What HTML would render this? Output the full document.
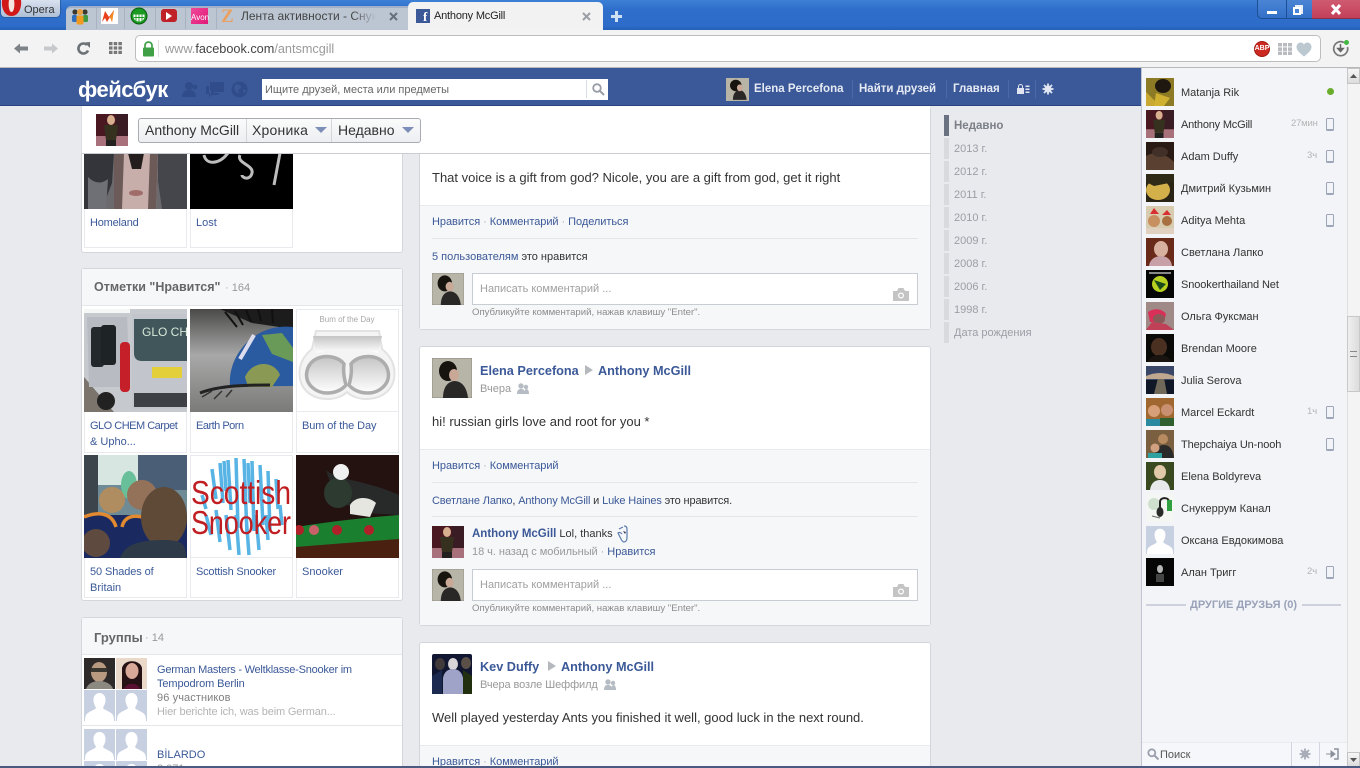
<!DOCTYPE html>
<html><head><meta charset="utf-8"><style>
*{box-sizing:border-box}
html,body{margin:0;padding:0;width:1360px;height:768px;overflow:hidden;background:#e9eaed}
body{position:relative;font-family:"Liberation Sans","Noto Sans CJK SC",sans-serif;font-size:11px;color:#333}
.a,.t{position:absolute}
.t{white-space:nowrap;line-height:14px;margin-top:1px}
.l{color:#3b5998}.g{color:#999}.d{color:#333}
.b{font-weight:bold}
.sep{color:#aaa}
.card{position:absolute;background:#fff;border:1px solid #d3d6db;border-radius:3px}
.cell{position:absolute;border:1px solid #e9eaed;background:#fff}
.hd{position:absolute;background:#f6f7f9;border-bottom:1px solid #e5e6e9}
.lk{position:absolute;height:1px;background:#e5e6e9}
.row{position:absolute;left:1181px;font-size:11px;color:#333;white-space:nowrap;line-height:14px;margin-top:1px}
.av{position:absolute;left:1146px;width:28px;height:28px}
.ph{position:absolute;left:1326px;width:8px;height:13px;border:1px solid #9da6b8;border-bottom-width:2px;border-radius:1.5px}
.yr{position:absolute;left:954px;font-size:11px;color:#9a9ea6;white-space:nowrap;line-height:14px;margin-top:1px}
.yb{position:absolute;left:944px;width:5px;height:21px;background:#d8dade}
.in{position:absolute;left:472px;width:446px;height:32px;background:#fff;border:1px solid #c8ccd3}
.hint{color:#8c8c8c;font-size:9.6px}
svg{position:absolute;display:block}
</style></head><body>

<!-- window chrome -->
<div class="a" style="left:0;top:0;width:1360px;height:30px;background:linear-gradient(#3d80d6,#2f6fcb 30%,#2d6cc8 85%,#2560b8)"></div>
<div class="a" style="left:0;top:0;width:61px;height:18px;background:linear-gradient(#d8e1ee,#aebfd6);border:1px solid #295ea8;border-top:0;border-radius:0 0 5px 5px"></div>
<svg style="left:1px;top:0" width="21" height="17" viewBox="0 0 21 17"><path d="M1 0h19c1 7-2 16-9.500 16S0 7 1 0z" fill="#d01818"/><path d="M8 0h5c1 5 0 12-2.500 12S7 5 8 0z" fill="#f4e4e0"/></svg>
<div class="t" style="left:24px;top:2px;color:#333;font-size:11px">Opera</div>

<div class="a" style="left:66px;top:6px;width:342px;height:24px;background:#bcc6d3;border-top:2px solid #9fb0c8;border-radius:5px 0 0 0"></div>
<div class="a" style="left:96px;top:8px;width:1px;height:21px;background:#a8b2c0"></div>
<div class="a" style="left:124px;top:8px;width:1px;height:21px;background:#a8b2c0"></div>
<div class="a" style="left:155px;top:8px;width:1px;height:21px;background:#a8b2c0"></div>
<div class="a" style="left:185px;top:8px;width:1px;height:21px;background:#a8b2c0"></div>
<div class="a" style="left:216px;top:8px;width:1px;height:21px;background:#a8b2c0"></div>
<svg style="left:71px;top:7px" width="18" height="18" viewBox="0 0 18 18"><circle cx="4" cy="5" r="2.600" fill="#3a3a30"/><circle cx="14" cy="5" r="2.600" fill="#3a3a30"/><circle cx="9" cy="5" r="3" fill="#e5a040"/><rect x="1" y="8" width="5" height="7" rx="1.500" fill="#2f6fc0"/><rect x="12" y="8" width="5" height="7" rx="1.500" fill="#3d9a40"/><rect x="5.500" y="8.500" width="7" height="9" rx="1.500" fill="#f09a20"/></svg>
<div class="a" style="left:101px;top:8px;width:17px;height:16px;background:#fff"></div>
<svg style="left:101px;top:8px" width="17" height="16" viewBox="0 0 17 16"><path d="M1 14 4 3l4 6 5-7-2 12-2-5-3 5-2-4z" fill="#e8401a"/><path d="M9 9l4-7-2 12z" fill="#f09020"/></svg>
<svg style="left:130px;top:7px" width="18" height="18" viewBox="0 0 18 18"><circle cx="9" cy="9" r="8" fill="#1a9a20" stroke="#0c5c10"/><path d="M3.500 7.500h11c.5 5-2 7-5.500 7s-6-2-5.500-7z" fill="#fff"/><path d="M6 7.500v6.500M9 7.500v7M12 7.500v6.500M4 10.500h10" stroke="#1a9a20" stroke-width=".9"/></svg>
<div class="a" style="left:161px;top:9px;width:16px;height:13px;background:#c02028;border-radius:3px"></div>
<svg style="left:166px;top:12px" width="7" height="8"><path d="M0 0l6 4-6 4z" fill="#fff"/></svg>
<div class="a" style="left:191px;top:8px;width:17px;height:16px;background:linear-gradient(135deg,#f04a9a,#e01878)"></div>
<div class="t" style="left:191px;top:11px;color:#fff;font-size:8px;width:17px;text-align:center;line-height:12px">Avon</div>
<div class="t b" style="left:221px;top:6px;color:#eaa060;font-size:19px;line-height:19px;font-family:'Liberation Serif',serif">Z</div>
<div class="t" style="left:241px;top:8px;color:#444;font-size:12px;width:135px;overflow:hidden">Лента активности - Снукеррум</div>
<div class="a" style="left:352px;top:9px;width:24px;height:15px;background:linear-gradient(90deg,rgba(188,198,211,0),#bcc6d3)"></div>
<svg style="left:389px;top:12px" width="9" height="9"><path d="M1 1l7 7M8 1 1 8" stroke="#66707c" stroke-width="2"/></svg>
<div class="a" style="left:408px;top:2px;width:195px;height:28px;background:#f2f2f2;border-radius:5px 5px 0 0"></div>
<div class="a" style="left:416px;top:9px;width:14px;height:14px;background:#3b5998"></div>
<div class="t b" style="left:423px;top:9px;color:#fff;font-size:13px;line-height:14px;font-family:'Liberation Serif',serif">f</div>
<div class="t" style="left:434px;top:8px;color:#222;font-size:11px;letter-spacing:-.2px">Anthony McGill</div>
<svg style="left:582px;top:12px" width="9" height="9"><path d="M1 1l7 7M8 1 1 8" stroke="#9a9fa6" stroke-width="2"/></svg>
<svg style="left:610px;top:10px" width="13" height="13"><path d="M6.500 1v11M1 6.500h11" stroke="#cfe0f5" stroke-width="3"/></svg>

<div class="a" style="left:1257px;top:-1px;width:30px;height:20px;background:linear-gradient(#4a84d4,#3270c8);border:1px solid #1e4e94;border-radius:0 0 0 5px"></div>
<div class="a" style="left:1286px;top:-1px;width:27px;height:20px;background:linear-gradient(#4a84d4,#3270c8);border:1px solid #1e4e94"></div>
<div class="a" style="left:1312px;top:-1px;width:48px;height:20px;background:linear-gradient(#cf5c72,#c4405a);border-bottom:1px solid #8c3048"></div>
<div class="a" style="left:1267px;top:11px;width:10px;height:3px;background:#fff"></div>
<div class="a" style="left:1295px;top:5px;width:8px;height:9px;border:2px solid #e8eef8;background:#4a84d4"></div>
<div class="a" style="left:1293px;top:7px;width:8px;height:8px;border:2px solid #fff;background:#4a84d4"></div>
<svg style="left:1330px;top:4px" width="12" height="11"><path d="M2 1l8 9M10 1 2 10" stroke="#fff" stroke-width="3"/></svg>

<!-- toolbar -->
<div class="a" style="left:0;top:30px;width:1360px;height:38px;background:#f3f3f3;border-bottom:1px solid #b8b8b8"></div>
<svg style="left:13px;top:41px" width="16" height="15"><path d="M1 7.500 7 2.500v3h8v4H7v3z" fill="#7d8287"/></svg>
<svg style="left:43px;top:41px" width="16" height="15"><path d="M15 7.500 9 2.500v3H1v4h8v3z" fill="#c6c9cc"/></svg>
<svg style="left:76px;top:41px" width="15" height="15" viewBox="0 0 15 15"><path d="M12 9.500A5 5 0 1 1 11 4" fill="none" stroke="#6d7277" stroke-width="2.600"/><path d="M8.500 1.500 14 1v6z" fill="#6d7277"/></svg>
<svg style="left:109px;top:42px" width="13" height="12" fill="#777"><rect width="3.500" height="3.200"/><rect x="4.700" width="3.500" height="3.200"/><rect x="9.400" width="3.500" height="3.200"/><rect y="4.400" width="3.500" height="3.200"/><rect x="4.700" y="4.400" width="3.500" height="3.200"/><rect x="9.400" y="4.400" width="3.500" height="3.200"/><rect y="8.800" width="3.500" height="3.200"/><rect x="4.700" y="8.800" width="3.500" height="3.200"/><rect x="9.400" y="8.800" width="3.500" height="3.200"/></svg>
<div class="a" style="left:135px;top:35px;width:1186px;height:27px;background:#fff;border:1px solid #bdbdbd;border-radius:5px"></div>
<svg style="left:142px;top:41px" width="13" height="16"><path d="M3 7V4.500a3.500 3.500 0 0 1 7 0V7" fill="none" stroke="#3fa046" stroke-width="1.700"/><rect x="1" y="6.500" width="11" height="9" rx="1" fill="#3fa046"/></svg>
<div class="a" style="left:158px;top:40px;width:1px;height:17px;background:#ddd"></div>
<div class="t" style="left:165px;top:40px;font-size:12.700px;line-height:16px;color:#9a9a9a">www.<span style="color:#444">facebook.com</span>/antsmcgill</div>
<div class="a" style="left:1254px;top:41px;width:16px;height:16px;background:#cc2a20;border-radius:50%;border:1px solid #a01a14"></div>
<div class="t b" style="left:1254px;top:42px;color:#fff;font-size:7px;width:16px;text-align:center;line-height:12px">ABP</div>
<svg style="left:1278px;top:43px" width="14" height="12" fill="#b8bcc0"><rect width="4" height="3.500"/><rect x="5" width="4" height="3.500"/><rect x="10" width="4" height="3.500"/><rect y="4.400" width="4" height="3.500"/><rect x="5" y="4.400" width="4" height="3.500"/><rect x="10" y="4.400" width="4" height="3.500"/><rect y="8.500" width="4" height="3.500"/><rect x="5" y="8.500" width="4" height="3.500"/><rect x="10" y="8.500" width="4" height="3.500"/></svg>
<svg style="left:1296px;top:42px" width="16" height="15"><path d="M8 14.500C3 10.500.5 8 .5 5 .5 2.500 2.500.5 4.500.5 6 .5 7.300 1.300 8 2.500 8.700 1.300 10 .5 11.500.5c2 0 4 2 4 4.500 0 3-2.500 5.500-7.500 9.500z" fill="#bcc8d0"/></svg>
<svg style="left:1332px;top:39px" width="18" height="19" viewBox="0 0 18 19"><path d="M12 3.500A7 7 0 1 0 15.500 8" fill="none" stroke="#777" stroke-width="1.700"/><path d="M8.500 5v6M5.800 9.500l2.700 3 2.700-3z" stroke="#666" stroke-width="1.500" fill="#666"/><circle cx="14.500" cy="3.500" r="2.500" fill="#42b840"/></svg>

<!-- fb header -->
<div class="a" style="left:0;top:68px;width:1141px;height:38px;background:#3b5998;border-bottom:1px solid #29447e"></div>
<div class="t b" style="left:78px;top:75px;color:#fff;font-size:22px;line-height:28px;letter-spacing:-.5px">фейсбук</div>
<svg style="left:181px;top:81px" width="18" height="17" fill="#304c8a"><circle cx="8" cy="5" r="4"/><path d="M1 16c0-5 3-7 7-7s7 2 7 7z"/><circle cx="14" cy="6" r="2.500"/></svg>
<svg style="left:206px;top:81px" width="18" height="16" fill="#304c8a"><path d="M4 1h14v10H8l-3 3V9H4z"/><path d="M0 5h3v7h1v3l3-3h6v2H7l-4 2v-3H0z"/></svg>
<svg style="left:231px;top:81px" width="17" height="17"><circle cx="8.500" cy="8.500" r="8" fill="#304c8a"/><path d="M5 3l4 1 1 3-3 2 1 4-3-2-2-4zM12 9l3 0-2 4z" fill="#3b5998"/></svg>
<div class="a" style="left:261px;top:78px;width:348px;height:23px;background:#fff;border:1px solid #3b5998"></div>
<div class="a" style="left:586px;top:80px;width:1px;height:18px;background:#d8dce4"></div>
<div class="t" style="left:265px;top:82px;color:#666;font-size:11px">Ищите друзей, места или предметы</div>
<svg style="left:592px;top:83px" width="13" height="13"><circle cx="5" cy="5" r="3.800" fill="none" stroke="#9a9ea8" stroke-width="1.800"/><path d="M8 8l4 4" stroke="#9a9ea8" stroke-width="2"/></svg>
<svg style="left:726px;top:78px" width="23" height="23" viewBox="0 0 40 40"><rect width="40" height="40" fill="#b8b4a6"/><ellipse cx="17" cy="13" rx="10" ry="10" fill="#17140f"/><path d="M12 38c0-10 4-16 11-17 8 0 12 8 13 17z" fill="#2a2826"/><ellipse cx="24" cy="17" rx="5" ry="6" fill="#c9a898"/></svg>
<div class="t b" style="left:754px;top:81px;color:#e6eaf4;font-size:11.500px">Elena Percefona</div>
<div class="a" style="left:852px;top:80px;width:1px;height:18px;background:#4c6aa8"></div>
<div class="t b" style="left:859px;top:81px;color:#e6eaf4;font-size:11.500px">Найти друзей</div>
<div class="a" style="left:946px;top:80px;width:1px;height:18px;background:#4c6aa8"></div>
<div class="t b" style="left:953px;top:81px;color:#e6eaf4;font-size:11.500px">Главная</div>
<div class="a" style="left:1008px;top:80px;width:1px;height:18px;background:#4c6aa8"></div>
<svg style="left:1017px;top:84px" width="13" height="11" fill="#dfe4f0"><rect y="4" width="7" height="6"/><path d="M1.500 4V2.500a2 2 0 0 1 4 0V4" fill="none" stroke="#dfe4f0"/><rect x="8.500" y="1.500" width="4" height="1.500"/><rect x="8.500" y="4.500" width="4" height="1.500"/><rect x="8.500" y="7.500" width="4" height="1.500"/></svg>
<div class="a" style="left:1035px;top:80px;width:1px;height:18px;background:#4c6aa8"></div>
<svg style="left:1042px;top:83px" width="12" height="12" viewBox="0 0 12 12"><circle cx="6" cy="6" r="3.500" fill="#e3e7f1"/><path d="M6 .5v11M.5 6h11M2 2l8 8M10 2l-8 8" stroke="#e3e7f1" stroke-width="1.800"/></svg>

<!-- left column cards -->
<div class="card" style="left:81px;top:107px;width:322px;height:146px"></div>
<svg style="left:84px;top:153px" width="103" height="56" viewBox="0 0 103 56"><rect width="103" height="56" fill="#6c6a6d"/><path d="M0 0h30l-2 30-10 26H0z" fill="#33353a"/><path d="M4 24q10 10 20 2l-2 30H4z" fill="#6f7075"/><path d="M74 0h29v56H78l-4-28z" fill="#45464c"/><path d="M30 0h44l-2 56H30z" fill="#c7aeaa"/><path d="M44 0h16l-3 16h-9z" fill="#231d1d"/><path d="M30 0h10l-2 56h-8zM66 0h8l-2 56h-8z" fill="#6b5a58"/><ellipse cx="52" cy="40" rx="7" ry="3" fill="#a06c6a"/></svg>
<div class="a" style="left:190px;top:153px;width:103px;height:56px;background:#000"></div>
<svg style="left:190px;top:153px" width="103" height="56" viewBox="0 0 103 56"><path d="M14 2c2 10 15 10 24-2M50 2c-4 8 14 10 12 18s-10 5-10 2M90 0l-6 32" fill="none" stroke="#bdbdbd" stroke-width="3"/></svg>
<div class="cell" style="left:84px;top:209px;width:103px;height:39px;border-top:0"></div>
<div class="cell" style="left:190px;top:209px;width:103px;height:39px;border-top:0"></div>
<div class="t l" style="left:90px;top:215px;letter-spacing:-.2px">Homeland</div>
<div class="t l" style="left:196px;top:215px">Lost</div>

<div class="card" style="left:81px;top:268px;width:322px;height:333px"></div>
<div class="hd" style="left:82px;top:269px;width:320px;height:37px"></div>
<div class="t b" style="left:94px;top:279px;color:#666;font-size:12.500px;line-height:15px">Отметки "Нравится"</div>
<div class="t g" style="left:225px;top:280px"><span class="sep">·</span> 164</div>

<svg style="left:84px;top:309px" width="103" height="103" viewBox="0 0 103 103"><rect width="103" height="103" fill="#c6c9cd"/><path d="M0 0h46v4H0z" fill="#f5f6f6"/><path d="M0 68l30 35H0z" fill="#7b746c"/><path d="M3 8h40l3 70H5z" fill="#b8bbc2"/><path d="M48 5h55v95H48z" fill="#c2c5cb"/><path d="M50 10h53v42H58q-8 0-8-8z" fill="#40565a"/><rect x="7" y="18" width="13" height="40" rx="3" fill="#22282b"/><rect x="17" y="16" width="15" height="40" rx="3" fill="#1e2326"/><rect x="36" y="33" width="10" height="50" rx="4" fill="#c5202a"/><rect x="68" y="58" width="30" height="11" fill="#e3cf3a"/><rect x="50" y="84" width="53" height="14" fill="#3d4044"/><text x="58" y="27" font-size="12" fill="#d6e8d8" font-family="Liberation Sans">GLO CHEM</text><circle cx="22" cy="92" r="9" fill="#222"/></svg>
<svg style="left:190px;top:309px" width="103" height="103" viewBox="0 0 103 103"><defs><linearGradient id="eg" x1="0" y1="0" x2="0" y2="1"><stop offset="0" stop-color="#4a4a49"/><stop offset=".45" stop-color="#a8a8a8"/><stop offset="1" stop-color="#7a7a79"/></linearGradient></defs><rect width="103" height="103" fill="url(#eg)"/><path d="M30 0h73v20L62 14z" fill="#1c1c1c"/><path d="M45 2l8 14M56 1l5 12M68 0l3 12M35 3l12 15M82 0l1 14" stroke="#111" stroke-width="2"/><path d="M40 76c-2-28 22-62 63-58v59q-30 0-46 1z" fill="#2a5aa0"/><path d="M55 68c8-18 30-16 35-2l-8 12H58z" fill="#8a9a55"/><path d="M72 26l20-2 11 15v14L82 45z" fill="#6a9a58"/><path d="M50 50 64 26" stroke="#dde" stroke-width="4"/><path d="M10 84c20-8 50-8 70-8" stroke="#222" stroke-width="3" fill="none"/><path d="M12 88l10-6M24 90l8-8M36 88l6-7" stroke="#333" stroke-width="1.500"/></svg>
<div class="a" style="left:296px;top:309px;width:103px;height:103px;background:#fff;border:1px solid #e9eaed"></div>
<svg style="left:296px;top:309px" width="103" height="103" viewBox="0 0 103 103"><text x="51" y="13" font-size="8" text-anchor="middle" fill="#a8a8a8" font-family="Liberation Sans">Bum of the Day</text><defs><linearGradient id="bg" x1="0" y1="0" x2="0" y2="1"><stop offset="0" stop-color="#c4c4c4"/><stop offset="1" stop-color="#fff"/></linearGradient></defs><path d="M20 22h63l3 18c10 8 14 18 12 30-3 14-15 20-28 20-8 0-15-3-19-7-4 4-11 7-19 7C19 90 7 84 4 70 2 58 6 48 16 40z" fill="#f4f4f4" stroke="#e2e2e2" stroke-width="2"/><path d="M17 27h69l-4 17-14-3H35l-15 3z" fill="url(#bg)"/><path d="M48 55C40 44 15 44 11 62c-3 14 10 22 20 22 8 0 15-3 19-8-2-7-3-14-2-21zM55 55c8-11 33-11 37 7 3 14-10 22-20 22-8 0-15-3-19-8 2-7 3-14 2-21z" fill="url(#bg)" stroke="#adadad" stroke-width="3.500"/></svg>
<div class="cell" style="left:84px;top:412px;width:103px;height:41px;border-top:0"></div>
<div class="cell" style="left:190px;top:412px;width:103px;height:41px;border-top:0"></div>
<div class="cell" style="left:296px;top:412px;width:103px;height:41px;border-top:0"></div>
<div class="t l" style="left:90px;top:418px;letter-spacing:-.5px">GLO CHEM Carpet</div>
<div class="t l" style="left:90px;top:434px">&amp; Upho...</div>
<div class="t l" style="left:196px;top:418px;letter-spacing:-.5px">Earth Porn</div>
<div class="t l" style="left:302px;top:418px;letter-spacing:-.1px">Bum of the Day</div>

<svg style="left:84px;top:455px" width="103" height="103" viewBox="0 0 103 103"><rect width="103" height="103" fill="#6f8b95"/><rect width="14" height="60" fill="#3c444c"/><rect x="14" y="0" width="40" height="30" fill="#d8e6e2"/><rect x="75" width="8" height="40" fill="#d98a30"/><rect x="54" width="50" height="35" fill="#4a5f75"/><ellipse cx="45" cy="30" rx="8" ry="14" fill="#68c09a"/><ellipse cx="28" cy="45" rx="13" ry="13" fill="#b08d60"/><ellipse cx="58" cy="40" rx="15" ry="15" fill="#94725a"/><rect y="60" width="103" height="43" fill="#1a2a60"/><path d="M0 62c15-6 28-4 32 10M38 72c2-10 10-12 20-10" fill="none" stroke="#e28a30" stroke-width="3.500"/><ellipse cx="12" cy="88" rx="14" ry="14" fill="#5f4a40"/><ellipse cx="80" cy="62" rx="23" ry="30" fill="#5f4a38"/><path d="M36 103c5-14 20-18 44-18s20 8 23 18z" fill="#2e3a48"/></svg>
<div class="a" style="left:190px;top:455px;width:103px;height:103px;background:#fff;border:1px solid #e9eaed"></div>
<svg style="left:190px;top:455px" width="103" height="103" viewBox="0 0 103 103"><g stroke="#58b4e4" stroke-width="3.500"><path d="M22 14l4 30M30 8l3 40M38 5l3 50M46 3l2 70M54 4l3 75M62 6l2 70M70 10l3 60M78 16l2 60M86 24l2 30M16 60l5 20M26 55l4 32M36 60l4 35M46 60l3 40M56 60l3 40M66 60l3 35M76 60l2 25M90 50l2 20M12 40l4 14M34 6l2 30M58 8l2 40"/></g><text x="51" y="49" font-size="33" text-anchor="middle" textLength="100" lengthAdjust="spacingAndGlyphs" fill="#c01e22" font-family="Liberation Sans">Scottish</text><text x="51" y="79" font-size="33" text-anchor="middle" textLength="100" lengthAdjust="spacingAndGlyphs" fill="#c01e22" font-family="Liberation Sans">Snooker</text></svg>
<svg style="left:296px;top:455px" width="103" height="103" viewBox="0 0 103 103"><rect width="103" height="103" fill="#241210"/><path d="M0 72q50-8 103-12v30q-40 0-60 3H0z" fill="#1a8030"/><path d="M0 92q50-4 103-8v19H0z" fill="#4a2010"/><path d="M30 15c10 10 40 10 73 25V60L70 58 40 45z" fill="#282a2a"/><ellipse cx="42" cy="38" rx="14" ry="15" fill="#2c3a30"/><circle cx="45" cy="17" r="8" fill="#f0f0f0"/><path d="M54 50c6-10 20-8 26-2l-6 14-20-3z" fill="#e6e6e0"/><g fill="#b02028"><circle cx="3" cy="75" r="5"/><circle cx="18" cy="75" r="5" fill="#c86068"/><circle cx="41" cy="75" r="5"/><circle cx="73" cy="75" r="5"/></g></svg>
<div class="cell" style="left:84px;top:558px;width:103px;height:40px;border-top:0"></div>
<div class="cell" style="left:190px;top:558px;width:103px;height:40px;border-top:0"></div>
<div class="cell" style="left:296px;top:558px;width:103px;height:40px;border-top:0"></div>
<div class="t l" style="left:90px;top:564px;letter-spacing:-.1px">50 Shades of</div>
<div class="t l" style="left:90px;top:580px">Britain</div>
<div class="t l" style="left:196px;top:564px;letter-spacing:-.2px">Scottish Snooker</div>
<div class="t l" style="left:302px;top:564px">Snooker</div>

<div class="card" style="left:81px;top:617px;width:322px;height:170px"></div>
<div class="hd" style="left:82px;top:618px;width:320px;height:37px"></div>
<div class="t b" style="left:94px;top:629px;color:#666;font-size:13px;line-height:15px">Группы</div>
<div class="t g" style="left:145px;top:630px"><span class="sep">·</span> 14</div>

<svg style="left:84px;top:658px" width="31" height="31" viewBox="0 0 31 31"><rect width="31" height="31" fill="#2f2a2a"/><ellipse cx="15" cy="14" rx="8" ry="10" fill="#b89a80"/><rect x="7" y="10" width="16" height="4" fill="#3a3630"/><path d="M2 31c2-6 8-8 13-8s12 2 14 8z" fill="#8c8a80"/></svg>
<svg style="left:116px;top:658px" width="31" height="31" viewBox="0 0 31 31"><rect width="31" height="31" fill="#ead8c8"/><path d="M6 31V10C8 1 24 1 26 10v21z" fill="#241214"/><ellipse cx="16" cy="13" rx="6.500" ry="8" fill="#d8a898"/><path d="M8 31c2-7 14-7 16 0z" fill="#5a1030"/></svg>
<svg width="0" height="0"><defs><symbol id="sil" viewBox="0 0 31 31"><rect width="31" height="31" fill="#c7d0e1"/><path d="M15.500 3c4 0 6.500 3.500 6 8-.4 3.500-2 5.500-2.500 7 1 2 8 3.500 10 7 .8 1.700 1 3.500 1 6H1c0-2.500.2-4.300 1-6 2-3.500 9-5 10-7-.5-1.500-2.100-3.500-2.500-7-.5-4.500 2-8 6-8z" fill="#fff"/></symbol></defs></svg>
<svg style="left:84px;top:690px" width="31" height="31"><use href="#sil"/></svg>
<svg style="left:116px;top:690px" width="31" height="31"><use href="#sil"/></svg>
<div class="t l" style="left:157px;top:662px;letter-spacing:-.24px">German Masters - Weltklasse-Snooker im</div>
<div class="t l" style="left:157px;top:676px;letter-spacing:-.1px">Tempodrom Berlin</div>
<div class="t" style="left:157px;top:690px;color:#808080;letter-spacing:.1px">96 участников</div>
<div class="t" style="left:157px;top:704px;color:#b4b4b4;letter-spacing:-.15px">Hier berichte ich, was beim German...</div>
<div class="lk" style="left:82px;top:725px;width:320px"></div>
<svg style="left:84px;top:729px" width="31" height="31"><use href="#sil"/></svg>
<svg style="left:116px;top:729px" width="31" height="31"><use href="#sil"/></svg>
<svg style="left:84px;top:761px" width="31" height="31"><use href="#sil"/></svg>
<svg style="left:116px;top:761px" width="31" height="31"><use href="#sil"/></svg>
<div class="t l" style="left:157px;top:747px">BİLARDO</div>
<div class="t g" style="left:157px;top:761px">2 071</div>

<!-- right column posts -->
<div class="card" style="left:419px;top:107px;width:512px;height:223px"></div>
<div class="t d" style="left:432px;top:170px;font-size:13px">That voice is a gift from god? Nicole, you are a gift from god, get it right</div>
<div class="a" style="left:420px;top:205px;width:510px;height:124px;background:#f6f7f8;border-top:1px solid #e9eaed"></div>
<div class="t l" style="left:432px;top:214px;letter-spacing:-.05px">Нравится <span class="sep">·</span> Комментарий <span class="sep">·</span> Поделиться</div>
<div class="lk" style="left:432px;top:238px;width:486px"></div>
<div class="t d" style="left:432px;top:249px"><span class="l">5 пользователям</span> это нравится</div>
<svg style="left:432px;top:273px" width="32" height="32" viewBox="0 0 40 40"><use href="#ep"/></svg>
<div class="in" style="top:273px"></div>
<div class="t" style="left:480px;top:281px;color:#a0a0a0">Написать комментарий ...</div>
<svg style="left:893px;top:288px" width="16" height="13"><use href="#cam"/></svg>
<div class="t hint" style="left:472px;top:305px">Опубликуйте комментарий, нажав клавишу "Enter".</div>

<svg width="0" height="0"><defs>
<symbol id="ep" viewBox="0 0 40 40"><rect width="40" height="40" fill="#b7b4a8"/><rect width="40" height="40" fill="none" stroke="#8e8c82"/><ellipse cx="16" cy="13" rx="9" ry="10" fill="#17140f"/><ellipse cx="22" cy="17" rx="5" ry="6" fill="#c9a898"/><path d="M11 40c0-10 4-16 11-17 9 0 13 8 14 17z" fill="#2a2826"/></symbol>
<symbol id="cam" viewBox="0 0 16 13"><path d="M0 3h4l1.500-3h5L12 3h4v10H0z" fill="#c4c4c4"/><circle cx="8" cy="7.500" r="3" fill="#fff"/><circle cx="8" cy="7.500" r="1.800" fill="#c4c4c4"/></symbol>
<symbol id="am" viewBox="0 0 32 32"><rect width="32" height="32" fill="#4a1820"/><rect x="20" width="12" height="32" fill="#3a1c24"/><rect x="0" y="22" width="32" height="10" fill="#a8707a"/><ellipse cx="15" cy="6" rx="4" ry="5" fill="#d8b090"/><path d="M8 11h14l-2 15H10z" fill="#36301f"/><rect x="10" y="26" width="10" height="6" fill="#232020"/></symbol>
</defs></svg>

<div class="card" style="left:419px;top:346px;width:512px;height:280px"></div>
<svg style="left:432px;top:358px" width="40" height="40" viewBox="0 0 40 40"><use href="#ep"/></svg>
<div class="t b l" style="left:480px;top:362px;font-size:12.700px;line-height:16px">Elena Percefona</div>
<svg style="left:585px;top:365px" width="8" height="10"><path d="M0 0l8 5-8 5z" fill="#b5b8bd"/></svg>
<div class="t b l" style="left:598px;top:362px;font-size:12.700px;line-height:16px">Anthony McGill</div>
<div class="t g" style="left:480px;top:381px">Вчера</div>
<svg style="left:517px;top:383px" width="12" height="11" fill="#b6bcc4"><circle cx="4" cy="3" r="2.700"/><path d="M0 11c0-4 1.500-5 4-5s4 1 4 5z"/><circle cx="9" cy="4" r="2.200"/><path d="M7 11c.5-3 1-5 2.500-5S12 8 12 11z"/></svg>
<div class="t d" style="left:432px;top:414px;font-size:13px">hi! russian girls love and root for you *</div>
<div class="a" style="left:420px;top:449px;width:510px;height:176px;background:#f6f7f8;border-top:1px solid #e9eaed"></div>
<div class="t l" style="left:432px;top:458px;letter-spacing:-.05px">Нравится <span class="sep">·</span> Комментарий</div>
<div class="lk" style="left:432px;top:482px;width:486px"></div>
<div class="t d" style="left:432px;top:493px;letter-spacing:-.14px"><span class="l">Светлане Лапко</span>, <span class="l">Anthony McGill</span> и <span class="l">Luke Haines</span> это нравится.</div>
<div class="lk" style="left:432px;top:516px;width:486px"></div>
<svg style="left:432px;top:526px" width="32" height="32"><use href="#am"/></svg>
<div class="t" style="left:472px;top:526px"><span class="b l" style="font-size:11.500px">Anthony McGill</span> <span class="d">Lol, thanks</span></div>
<svg style="left:616px;top:525px" width="14" height="18" viewBox="0 0 14 18"><path d="M8 1c2 0 3 1 3 3l0 8c0 3-1 5-3 5-1 0-2-1-3-3L2 8c1-1 3-.5 4 1 M3 4l4-2" fill="none" stroke="#5b7bb0" stroke-width="1.200"/><path d="M7 6l3 1-1 2z" fill="#335"/></svg>
<div class="t g" style="left:472px;top:544px;letter-spacing:-.05px">18 ч. назад с мобильный <span class="sep">·</span> <span class="l">Нравится</span></div>
<svg style="left:432px;top:569px" width="32" height="32" viewBox="0 0 40 40"><use href="#ep"/></svg>
<div class="in" style="top:569px"></div>
<div class="t" style="left:480px;top:577px;color:#a0a0a0">Написать комментарий ...</div>
<svg style="left:893px;top:584px" width="16" height="13"><use href="#cam"/></svg>
<div class="t hint" style="left:472px;top:601px">Опубликуйте комментарий, нажав клавишу "Enter".</div>

<div class="card" style="left:419px;top:642px;width:512px;height:160px"></div>
<svg style="left:432px;top:654px" width="40" height="40" viewBox="0 0 40 40"><rect width="40" height="40" rx="2" fill="#111730"/><ellipse cx="21" cy="10" rx="5" ry="6" fill="#d8d4d8"/><path d="M11 40V24c1-6 5-9 10-9s9 3 10 9v16z" fill="#9fa3c8"/><ellipse cx="8" cy="10" rx="5" ry="6" fill="#403a3a"/><ellipse cx="34" cy="9" rx="5" ry="6" fill="#5a5048"/><path d="M0 22l10-6v24H0z" fill="#1c2a50"/><path d="M31 16l9 6v18H31z" fill="#223010"/></svg>
<div class="t b l" style="left:480px;top:658px;font-size:12.700px;line-height:16px">Kev Duffy</div>
<svg style="left:548px;top:661px" width="8" height="10"><path d="M0 0l8 5-8 5z" fill="#b5b8bd"/></svg>
<div class="t b l" style="left:561px;top:658px;font-size:12.700px;line-height:16px">Anthony McGill</div>
<div class="t g" style="left:480px;top:677px;letter-spacing:-.1px">Вчера возле Шеффилд</div>
<svg style="left:604px;top:679px" width="12" height="11" fill="#b6bcc4"><circle cx="4" cy="3" r="2.700"/><path d="M0 11c0-4 1.500-5 4-5s4 1 4 5z"/><circle cx="9" cy="4" r="2.200"/><path d="M7 11c.5-3 1-5 2.500-5S12 8 12 11z"/></svg>
<div class="t d" style="left:432px;top:710px;font-size:13px">Well played yesterday Ants you finished it well, good luck in the next round.</div>
<div class="a" style="left:420px;top:745px;width:510px;height:30px;background:#f6f7f8;border-top:1px solid #e9eaed"></div>
<div class="t l" style="left:432px;top:754px;letter-spacing:-.05px">Нравится <span class="sep">·</span> Комментарий</div>

<!-- sticky header -->
<div class="a" style="left:81px;top:106px;width:849px;height:48px;background:#fff;border-bottom:1px solid #c9ccd2;border-left:1px solid #dcdee2"></div>
<svg style="left:96px;top:114px" width="32" height="32"><use href="#am"/></svg>
<div class="a" style="left:138px;top:118px;width:283px;height:25px;background:linear-gradient(#fbfbfb,#eceef1);border:1px solid #a8abb2;border-radius:3px"></div>
<div class="a" style="left:246px;top:119px;width:1px;height:23px;background:#d4d6da"></div>
<div class="a" style="left:331px;top:119px;width:1px;height:23px;background:#d4d6da"></div>
<div class="t" style="left:145px;top:122px;color:#333;font-size:14px;line-height:15px">Anthony McGill</div>
<div class="t" style="left:252px;top:122px;color:#333;font-size:14px;line-height:15px;letter-spacing:.2px">Хроника</div>
<div class="t" style="left:338px;top:122px;color:#333;font-size:14px;line-height:15px">Недавно</div>
<svg style="left:315px;top:127px" width="12" height="6"><path d="M0 0h12L6 6z" fill="#7d8fb8"/></svg>
<svg style="left:402px;top:127px" width="12" height="6"><path d="M0 0h12L6 6z" fill="#7d8fb8"/></svg>

<!-- timeline nav -->
<div class="a" style="left:944px;top:115px;width:5px;height:21px;background:#6a7180"></div>
<div class="t b" style="left:954px;top:118px;color:#7b7f87;font-size:11.500px">Недавно</div>
<div class="yb" style="top:138px"></div><div class="yr" style="top:141px">2013 г.</div>
<div class="yb" style="top:161px"></div><div class="yr" style="top:164px">2012 г.</div>
<div class="yb" style="top:184px"></div><div class="yr" style="top:187px">2011 г.</div>
<div class="yb" style="top:207px"></div><div class="yr" style="top:210px">2010 г.</div>
<div class="yb" style="top:230px"></div><div class="yr" style="top:233px">2009 г.</div>
<div class="yb" style="top:253px"></div><div class="yr" style="top:256px">2008 г.</div>
<div class="yb" style="top:276px"></div><div class="yr" style="top:279px">2006 г.</div>
<div class="yb" style="top:299px"></div><div class="yr" style="top:302px">1998 г.</div>
<div class="yb" style="top:322px"></div><div class="yr" style="top:325px">Дата рождения</div>

<!-- chat sidebar -->
<div class="a" style="left:1141px;top:68px;width:206px;height:700px;background:#f2f4f8;border-left:1px solid #bfc4d0"></div>
<svg class="av" style="top:78px" viewBox="0 0 28 28"><rect width="28" height="28" fill="#8c7a25"/><path d="M0 14l14 14H0z" fill="#c8a830"/><ellipse cx="17" cy="8" rx="8" ry="7" fill="#1f1810"/><path d="M10 15l14 5-6 8H8z" fill="#d0b030"/></svg>
<svg class="av" style="top:110px"><use href="#am"/></svg>
<svg class="av" style="top:142px" viewBox="0 0 28 28"><rect width="28" height="28" fill="#2a1a14"/><path d="M0 14c10-6 20-2 28 6v8H0z" fill="#5a4030"/><ellipse cx="14" cy="10" rx="8" ry="5" fill="#403028"/></svg>
<svg class="av" style="top:174px" viewBox="0 0 28 28"><rect width="28" height="28" fill="#2a2416"/><ellipse cx="12" cy="16" rx="12" ry="10" fill="#d4b04a"/><path d="M0 0h28v8L8 12 0 8z" fill="#2f2a18"/></svg>
<svg class="av" style="top:206px" viewBox="0 0 28 28"><rect width="28" height="28" fill="#d8ccb0"/><circle cx="8" cy="15" r="6" fill="#c89060"/><circle cx="21" cy="15" r="5" fill="#a87040"/><path d="M4 8l4-6 5 6zM16 9l5-5 4 5z" fill="#d83030"/><rect y="22" width="28" height="6" fill="#e0d0c0"/></svg>
<svg class="av" style="top:238px" viewBox="0 0 28 28"><rect width="28" height="28" fill="#6a2a1a"/><ellipse cx="15" cy="11" rx="7" ry="8" fill="#d8b0a0"/><path d="M3 28c1-8 8-10 12-10s10 2 11 10z" fill="#c8a0a8"/></svg>
<svg class="av" style="top:270px" viewBox="0 0 28 28"><rect width="28" height="28" fill="#060606"/><ellipse cx="14" cy="14" rx="8" ry="8" fill="#b8d020"/><path d="M8 10l12 4-6 6z" fill="#1a4a1a"/><rect x="3" y="2" width="22" height="2" fill="#888"/></svg>
<svg class="av" style="top:302px" viewBox="0 0 28 28"><rect width="28" height="28" fill="#a08a88"/><path d="M2 10c5-4 14-4 18 2l-2 8H4z" fill="#d83058"/><ellipse cx="13" cy="17" rx="6" ry="5" fill="#8a5a58"/><path d="M0 28l6-8 14 2 8 6z" fill="#c04058"/></svg>
<svg class="av" style="top:334px" viewBox="0 0 28 28"><rect width="28" height="28" fill="#0a0a08"/><ellipse cx="13" cy="13" rx="8" ry="9" fill="#4a3020"/><path d="M2 28c2-6 8-7 12-7s9 1 11 7z" fill="#1a1410"/></svg>
<svg class="av" style="top:366px" viewBox="0 0 28 28"><rect width="28" height="18" fill="#3a4668"/><rect y="14" width="28" height="14" fill="#101828"/><path d="M8 28l4-16c2-2 5-2 6 0l3 16z" fill="#706858"/><path d="M0 10q14-6 28 0v3H0z" fill="#c0a890"/></svg>
<svg class="av" style="top:398px" viewBox="0 0 28 28"><rect width="28" height="28" fill="#a06830"/><circle cx="8" cy="13" r="6" fill="#d8a078"/><circle cx="21" cy="12" r="6" fill="#c89070"/><rect y="21" width="14" height="7" fill="#2a8aa0"/><rect x="14" y="20" width="14" height="8" fill="#306030"/></svg>
<svg class="av" style="top:430px" viewBox="0 0 28 28"><rect width="28" height="28" fill="#7a6040"/><circle cx="17" cy="9" r="5" fill="#b88a60"/><path d="M8 28c0-8 4-13 10-13s9 5 10 13z" fill="#2a2a2a"/><circle cx="9" cy="18" r="4.500" fill="#d0a080"/><rect x="2" y="23" width="14" height="5" fill="#30a0a0"/></svg>
<svg class="av" style="top:462px" viewBox="0 0 28 28"><rect width="28" height="28" fill="#3a4a20"/><ellipse cx="14" cy="10" rx="6" ry="7" fill="#e0c8a8"/><path d="M4 28c1-8 6-10 10-10s9 2 10 10z" fill="#e6e8ea"/></svg>
<svg class="av" style="top:494px" viewBox="0 0 28 28"><rect width="28" height="28" fill="#f4f6f4"/><circle cx="8" cy="10" r="6" fill="#cfe0cf"/><path d="M14 16V8c0-5 8-5 9-1v9" fill="none" stroke="#222" stroke-width="2"/><rect x="21" y="6" width="5" height="11" fill="#30a040"/><ellipse cx="14" cy="18" rx="3.500" ry="5" fill="#2a2a2a"/><path d="M6 22l8 2" stroke="#666" stroke-width="1"/></svg>
<svg class="av" style="top:526px"><use href="#sil"/></svg>
<svg class="av" style="top:558px" viewBox="0 0 28 28"><rect width="28" height="28" fill="#060606"/><ellipse cx="14" cy="11" rx="3" ry="4" fill="#b8b8b8"/><path d="M10 24V16h8v8z" fill="#444"/></svg>

<div class="row" style="top:85px">Matanja Rik</div>
<div class="row" style="top:117px;letter-spacing:-.2px">Anthony McGill</div>
<div class="row" style="top:149px">Adam Duffy</div>
<div class="row" style="top:181px">Дмитрий Кузьмин</div>
<div class="row" style="top:213px">Aditya Mehta</div>
<div class="row" style="top:245px">Светлана Лапко</div>
<div class="row" style="top:277px;letter-spacing:-.1px">Snookerthailand Net</div>
<div class="row" style="top:309px">Ольга Фуксман</div>
<div class="row" style="top:341px">Brendan Moore</div>
<div class="row" style="top:373px">Julia Serova</div>
<div class="row" style="top:405px">Marcel Eckardt</div>
<div class="row" style="top:437px;letter-spacing:-.1px">Thepchaiya Un-nooh</div>
<div class="row" style="top:469px">Elena Boldyreva</div>
<div class="row" style="top:501px">Снукеррум Канал</div>
<div class="row" style="top:533px">Оксана Евдокимова</div>
<div class="row" style="top:565px">Алан Тригг</div>

<div class="a" style="left:1327px;top:88px;width:7px;height:7px;border-radius:50%;background:#6aac2c"></div>
<div class="t" style="left:1291px;top:116px;color:#b5b5b5;font-size:9.500px;letter-spacing:-.2px">27мин</div><div class="ph" style="top:118px"></div>
<div class="t" style="left:1307px;top:148px;color:#b5b5b5;font-size:9.500px">3ч</div><div class="ph" style="top:150px"></div>
<div class="ph" style="top:182px"></div>
<div class="ph" style="top:214px"></div>
<div class="t" style="left:1307px;top:404px;color:#b5b5b5;font-size:9.500px">1ч</div><div class="ph" style="top:406px"></div>
<div class="ph" style="top:438px"></div>
<div class="t" style="left:1307px;top:564px;color:#b5b5b5;font-size:9.500px">2ч</div><div class="ph" style="top:566px"></div>

<div class="a" style="left:1146px;top:604px;width:40px;height:2px;background:#cdd1dc"></div>
<div class="t b" style="left:1190px;top:597px;color:#9aa2b8;font-size:11px">ДРУГИЕ ДРУЗЬЯ (0)</div>
<div class="a" style="left:1302px;top:604px;width:39px;height:2px;background:#cdd1dc"></div>

<div class="a" style="left:1142px;top:742px;width:205px;height:24px;background:#f6f7fa;border-top:1px solid #e9ebf0"></div>
<div class="a" style="left:1291px;top:742px;width:1px;height:24px;background:#d3d6de"></div>
<div class="a" style="left:1319px;top:742px;width:1px;height:24px;background:#d3d6de"></div>
<svg style="left:1147px;top:748px" width="12" height="12"><circle cx="4.800" cy="4.800" r="3.500" fill="none" stroke="#9aa0ac" stroke-width="1.800"/><path d="M7.500 7.500l4 4" stroke="#9aa0ac" stroke-width="2"/></svg>
<div class="t" style="left:1160px;top:747px;color:#555;font-size:11px">Поиск</div>
<svg style="left:1299px;top:748px" width="12" height="12" viewBox="0 0 12 12"><circle cx="6" cy="6" r="3.500" fill="#a8adb8"/><path d="M6 .5v11M.5 6h11M2 2l8 8M10 2l-8 8" stroke="#a8adb8" stroke-width="1.800"/></svg>
<svg style="left:1326px;top:748px" width="13" height="12"><path d="M0 6h5V3l4 3-4 3V6" fill="#8a909c" stroke="#8a909c"/><path d="M8 1h4v10H8" fill="none" stroke="#8a909c" stroke-width="1.500"/></svg>

<!-- scrollbar -->
<div class="a" style="left:1347px;top:68px;width:13px;height:700px;background:#f4f4f4;border-left:1px solid #e0e0e0"></div>
<div class="a" style="left:1347px;top:68px;width:13px;height:16px;background:linear-gradient(#f6f6f6,#dcdcdc);border:1px solid #c4c4c4"></div>
<svg style="left:1350px;top:74px" width="7" height="4"><path d="M0 4l3.500-4L7 4z" fill="#555"/></svg>
<div class="a" style="left:1347px;top:316px;width:13px;height:76px;background:linear-gradient(90deg,#efefef,#dcdcdc);border:1px solid #c8c8c8"></div>
<div class="a" style="left:1350px;top:351px;width:7px;height:6px;border-top:1px solid #888;border-bottom:1px solid #888"></div>
<div class="a" style="left:1347px;top:752px;width:13px;height:15px;background:linear-gradient(#f6f6f6,#dcdcdc);border:1px solid #c4c4c4"></div>
<svg style="left:1350px;top:758px" width="7" height="4"><path d="M0 0l3.500 4L7 0z" fill="#555"/></svg>

<div class="a" style="left:0;top:766px;width:1360px;height:2px;background:#4a5a80"></div>
</body></html>
